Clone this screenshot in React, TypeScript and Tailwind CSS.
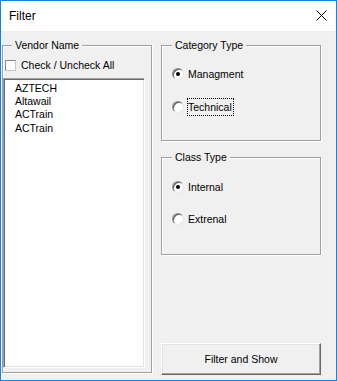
import React from "react";

const font = { fontFamily: '"Liberation Sans", Arial, sans-serif' };

function Frame({
  label,
  labelLeft,
  className,
  children,
}: {
  label: string;
  labelLeft: string;
  className: string;
  children?: React.ReactNode;
}) {
  return (
    <div
      className={`relative border border-[#a0a0a0] shadow-[inset_1px_1px_0_#ffffff,1px_1px_0_#ffffff] ${className}`}
    >
      <span
        className={`absolute top-[-7px] ${labelLeft} bg-[#f0f0f0] px-[3px] text-[10.5px] leading-[13px] text-black whitespace-nowrap`}
      >
        {label}
      </span>
      {children}
    </div>
  );
}

function Radio({ checked }: { checked?: boolean }) {
  return (
    <span className="relative flex h-[12px] w-[12px] shrink-0 items-center justify-center rounded-full border border-t-[#8a8a8a] border-l-[#8a8a8a] border-b-[#e6e6e6] border-r-[#e6e6e6] bg-white shadow-[inset_1px_1px_0_#5a5a5a]">
      {checked && <span className="h-[4px] w-[4px] rounded-full bg-black" />}
    </span>
  );
}

export default function App() {
  const items = ["AZTECH", "Altawail", "ACTrain", "ACTrain"];
  return (
    <div
      style={font}
      className="flex h-[381px] w-[337px] flex-col border border-[#1883d7] bg-white text-black"
    >
      <div className="flex h-[30px] shrink-0 items-center justify-between bg-white pl-[8px] pr-[9px]">
        <span className="text-[12px] leading-[14px]">Filter</span>
        <svg width="11" height="11" viewBox="0 0 11 11" className="mt-[-1px]">
          <path d="M0.5 0.5 L10.5 10.5 M10.5 0.5 L0.5 10.5" stroke="#000" strokeWidth="1" />
        </svg>
      </div>
      <div className="flex flex-1 items-start bg-[#f0f0f0]">
        <Frame
          label="Vendor Name"
          labelLeft="left-[9px]"
          className="ml-[1px] mt-[14px] h-[328px] w-[150px]"
        >
          <div className="ml-[2px] mt-[13px] flex h-[13px] items-center gap-[5px]">
            <span className="h-[11px] w-[11px] shrink-0 border border-t-[#8a8a8a] border-l-[#8a8a8a] border-b-[#c8c8c8] border-r-[#c8c8c8] bg-white" />
            <span className="text-[10.5px] leading-[13px] whitespace-nowrap">Check / Uncheck All</span>
          </div>
          <div className="mt-[6px] h-[290px] w-[142px] border border-t-[#a0a0a0] border-l-[#a0a0a0] border-b-white border-r-white bg-white pl-[11px] pt-[3px] shadow-[inset_1px_1px_0_#696969,inset_-1px_-1px_0_#e3e3e3]">
            {items.map((it, i) => (
              <div key={i} className="text-[10.5px] leading-[13.2px]">
                {it}
              </div>
            ))}
          </div>
        </Frame>
        <div className="ml-[9px] mt-[14px] flex w-[160px] flex-col">
          <Frame label="Category Type" labelLeft="left-[10px]" className="h-[96px] w-[160px]">
            <div className="mt-[20px] flex h-[16px] items-center gap-[4px] pl-[10px]">
              <Radio checked />
              <span className="text-[10.5px] leading-[13px]">Managment</span>
            </div>
            <div className="mt-[17px] flex h-[16px] items-center gap-[3px] pl-[10px]">
              <Radio />
              <span className="border border-dotted border-black pr-[1px] pt-[2px] pb-[1px] text-[10.5px] leading-[13px]">
                Technical
              </span>
            </div>
          </Frame>
          <Frame label="Class Type" labelLeft="left-[10px]" className="mt-[16px] h-[98px] w-[160px]">
            <div className="mt-[21px] flex h-[16px] items-center gap-[4px] pl-[10px]">
              <Radio checked />
              <span className="text-[10.5px] leading-[13px]">Internal</span>
            </div>
            <div className="mt-[16px] flex h-[16px] items-center gap-[4px] pl-[10px]">
              <Radio />
              <span className="text-[10.5px] leading-[13px]">Extrenal</span>
            </div>
          </Frame>
          <button
            className="mt-[88px] flex h-[32px] w-[160px] items-center justify-center border border-t-white border-l-white border-b-[#696969] border-r-[#696969] bg-[#f0f0f0] text-[10.5px] leading-[13px] text-black shadow-[inset_-1px_-1px_0_#a0a0a0,inset_1px_1px_0_#e3e3e3]"
            style={font}
          >
            Filter and Show
          </button>
        </div>
      </div>
    </div>
  );
}
